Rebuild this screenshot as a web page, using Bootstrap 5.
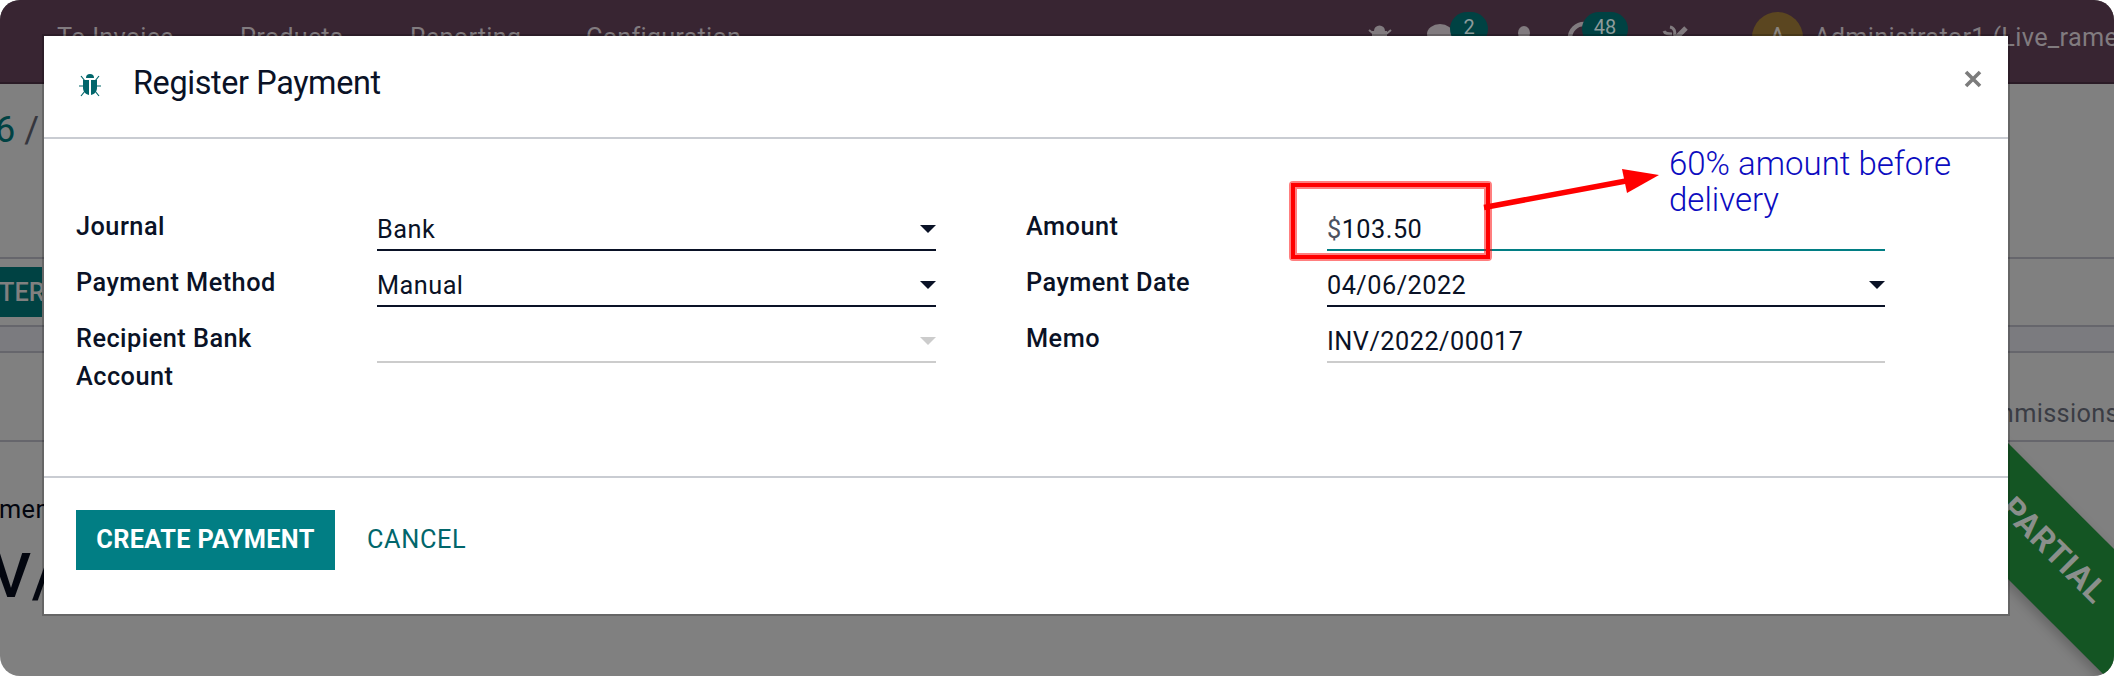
<!DOCTYPE html>
<html lang="en">
<head>
<meta charset="utf-8">
<title>Register Payment</title>
<link href="https://cdn.jsdelivr.net/npm/bootstrap@5.3.0/dist/css/bootstrap.min.css" rel="stylesheet">
<style>
html,body{height:677px;overflow:hidden;background:#fff}
body{font-family:Roboto,"Liberation Sans",sans-serif;font-size:25.3px;line-height:38px;color:#0a1226}
.screen{width:2114px;height:676px;border-radius:20px;background:#808080}
.topnav{height:84px;background:#382532;border-bottom:2px solid #2a1b26;color:#817b7f}
.topnav .menu-link{position:absolute;top:19px;letter-spacing:.2px}
.tray{position:absolute}
.pill{background:#004243;color:#8d9b9b;border-radius:18px;font-size:20px;line-height:31px;height:34px;top:12px;text-align:center}
.avatar{width:51px;height:51px;border-radius:50%;background:#5b4620;color:#8a8580;left:1752px;top:12px;line-height:51px;text-align:center}
.crumb{height:173px;font-size:36px;color:#004243;padding-top:27px;margin-left:-5px}
.actions{height:70px;border-top:2px solid #66666c;border-bottom:2px solid #66666c;padding-top:8px}
.actions div{width:42px;height:50px;background:#004243;color:#808080;font-weight:500;line-height:51px;overflow:hidden;text-indent:-1px}
.gapbar{height:24px;background:#7b7b7f}
.tabs{height:91px;border-top:2px solid #66666c;border-bottom:2px solid #66666c;color:#3a3c44;padding-top:42px}
.tabs span{margin-right:-5px;letter-spacing:.35px}
.doc{color:#03060f}
.doc-kind{margin-top:49px;margin-left:-1px;letter-spacing:.4px}
.doc-no{font-size:62px;line-height:70px;margin:12px 0 0 -9px;font-weight:500;letter-spacing:1px}
.ribbon{position:absolute;width:420px;height:96px;left:1849px;top:514px;transform:rotate(45deg);background:#145523;box-shadow:0 5px 12px rgba(0,0,0,.22);color:#8a8f8b;font-size:32.5px;font-weight:700;line-height:86px;text-align:center;padding-right:24px;letter-spacing:.6px}
.dialog{position:absolute;left:42px;top:34px;width:1968px;height:582px;border:2px solid rgba(0,0,0,.2);background:#fff;background-clip:padding-box}
.dialog-head{height:103px;border-bottom:2px solid #c9ccd2;padding:0 26px 0 34px}
.dialog-title{font-size:32.4px;font-weight:400;line-height:48px;margin:0 0 8px 31px;letter-spacing:-.38px}
.dialog-main{height:337px;padding:70px 32px 0}
.f-row{height:56px}
.f-label{width:301px;font-weight:500;line-height:38px;padding-right:60px;margin-top:-1px;flex:none;letter-spacing:.48px}
.f-field{width:559px;height:42px;border-bottom:2px solid #0a1226;line-height:41px;letter-spacing:.47px}
.f-field.soft{border-color:#ccc}
.f-field.focus{border-color:#017e84}
.caret{width:0;height:0;border:8px solid transparent;border-top-color:#0a1226;border-bottom:0}
.soft .caret{border-top-color:#ccc}
.dialog-foot{height:136px;border-top:2px solid #c9ccd2;padding:32px}
.dialog-foot .btn{border-radius:0;border:0;height:60px;font-size:25.3px;line-height:60px;padding:0;font-weight:500}
.dialog-foot .btn-create{background:#017e84;color:#fff;width:259px;font-weight:700;letter-spacing:.35px}
.dialog-foot .btn-cancel{color:#01666b;font-weight:400;margin-left:32px;letter-spacing:.65px}
.note{position:absolute;left:1669px;top:146px;font-size:33px;line-height:36px;font-weight:300;color:#0c0cc0}
</style>
</head>
<body>
<div class="screen position-relative overflow-hidden">
  <nav class="topnav">
    <span class="menu-link" style="left:57px">To Invoice</span>
    <span class="menu-link" style="left:240px">Products</span>
    <span class="menu-link" style="left:410px">Reporting</span>
    <span class="menu-link" style="left:586px">Configuration</span>
    <svg class="tray" style="left:1360px;top:0" width="350" height="50" fill="#817b7f">
      <path d="M14 31a5.500 5.500 0 0 1 11 0zM12 31h15v14H12z"/><path d="M9 30l6 5M31 30l-6 5" stroke="#817b7f" stroke-width="2"/>
      <ellipse cx="80" cy="34" rx="13" ry="10"/><ellipse cx="164" cy="33" rx="6" ry="7"/>
      <path d="M224 24a14 14 0 0 0-14 14" fill="none" stroke="#817b7f" stroke-width="4.500"/>
      <path d="M310 27a6 6 0 0 1 4 9M304 31c1 3 4 3 8 3" fill="none" stroke="#817b7f" stroke-width="3"/><path d="M326 28l-13 13" stroke="#817b7f" stroke-width="5"/>
    </svg>
    <span class="tray pill" style="left:1450px;width:38px">2</span>
    <span class="tray pill" style="left:1582px;width:46px">48</span>
    <span class="tray avatar">A</span>
    <span class="menu-link text-nowrap" style="left:1814px;letter-spacing:.3px">Administrator1 (Live_rame</span>
  </nav>
  <div class="crumb">6 <span style="color:#35363d">/</span></div>
  <div class="actions"><div>TER</div></div>
  <div class="gapbar"></div>
  <div class="tabs d-flex justify-content-end"><span>ommissions</span></div>
  <div class="doc"><div class="doc-kind">ment</div><div class="doc-no">V/</div></div>
  <div class="ribbon">PARTIAL</div>

  <section class="dialog" role="dialog">
    <header class="dialog-head d-flex align-items-center">
      <svg class="mb-1" width="24" height="26" viewBox="0 0 22 26" stroke="#01666b" fill="#01666b" stroke-width="2"><path d="M7 6a4 4 0 0 1 8 0z" stroke="none"/><path d="M4 8h6v15C6 22 4 19 4 16zM12 8h6v8c0 3-2 6-6 7z" stroke="none"/><path d="M2 4l4 5M20 4l-4 5M0 14h5M17 14h5M2 24l4-5M20 24l-4-5" stroke-width="1.2"/></svg>
      <h4 class="dialog-title">Register Payment</h4>
      <svg class="ms-auto" style="margin-bottom:16px" width="18" height="18" stroke="#7c7c7c" stroke-width="3.6"><path d="M2 2l14 14M16 2L2 16"/></svg>
    </header>
    <div class="dialog-main d-flex">
      <div style="width:950px">
        <div class="f-row d-flex"><label class="f-label">Journal</label><div class="f-field d-flex justify-content-between align-items-center">Bank<i class="caret"></i></div></div>
        <div class="f-row d-flex"><label class="f-label">Payment Method</label><div class="f-field d-flex justify-content-between align-items-center">Manual<i class="caret"></i></div></div>
        <div class="f-row d-flex"><label class="f-label">Recipient Bank Account</label><div class="f-field soft d-flex justify-content-end align-items-center"><i class="caret"></i></div></div>
      </div>
      <div>
        <div class="f-row d-flex"><label class="f-label">Amount</label><div class="f-field focus" style="width:558px"><span style="color:#4c5160">$</span>103.50</div></div>
        <div class="f-row d-flex"><label class="f-label">Payment Date</label><div class="f-field d-flex justify-content-between align-items-center" style="width:558px">04/06/2022<i class="caret"></i></div></div>
        <div class="f-row d-flex"><label class="f-label">Memo</label><div class="f-field soft" style="width:558px">INV/2022/00017</div></div>
      </div>
    </div>
    <footer class="dialog-foot d-flex"><button class="btn btn-create">CREATE PAYMENT</button><button class="btn btn-cancel">CANCEL</button></footer>
  </section>

  <svg class="position-absolute top-0 start-0" width="2114" height="676" fill="none" stroke="#f00"><rect x="1293" y="185" width="195" height="72" stroke-width="8" stroke-opacity=".5" stroke-linejoin="round"/><rect x="1293" y="185" width="195" height="72" stroke-width="4"/><path d="M1484 207.500L1626 181" stroke-width="5.500"/><path d="M1659 175l-37-6 5 24z" fill="#f00" stroke="none"/></svg>
  <div class="note">60% amount before<br>delivery</div>
</div>
<script src="https://cdn.jsdelivr.net/npm/bootstrap@5.3.0/dist/js/bootstrap.bundle.min.js"></script>
</body>
</html>
